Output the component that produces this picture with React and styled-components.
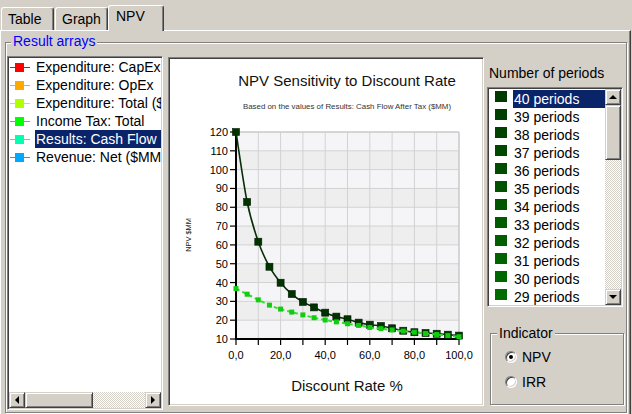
import React from "react";
import styled, { createGlobalStyle } from "styled-components";

const Global = createGlobalStyle`
  html, body { margin: 0; padding: 0; }
  body {
    width: 632px; height: 414px; overflow: hidden;
    background: #d4d0c8;
    font-family: "Liberation Sans", Arial, sans-serif;
    font-size: 14px; color: #000;
  }
`;

const Window = styled.div`
  width: 632px; height: 414px; overflow: hidden; background: #d4d0c8;
`;

const TabStrip = styled.div`
  position: relative; z-index: 1;
  display: flex; align-items: flex-end;
  height: 31px; padding-left: 1px; box-sizing: border-box;
`;

const Tab = styled.div`
  box-sizing: border-box;
  width: ${(p) => p.$w}px;
  height: ${(p) => (p.$active ? 26 : 23)}px;
  margin-left: ${(p) => p.$ml || 0}px;
  margin-bottom: ${(p) => (p.$active ? 0 : 1)}px;
  padding-left: ${(p) => (p.$active ? 7 : 6)}px;
  padding-top: ${(p) => (p.$active ? 2 : 3)}px;
  line-height: 16px;
  background: #d4d0c8;
  border-top: 1px solid #fff;
  border-left: 1px solid #fff;
  border-right: 1px solid #404040;
  border-radius: 3px 3px 0 0;
  box-shadow: inset -1px 0 0 #808080;
`;

const Panel = styled.div`
  box-sizing: border-box;
  width: 631px; height: 390px;
  margin-top: -1px;
  border-top: 1px solid #fff;
  border-left: 1px solid #fff;
  border-right: 1px solid #404040;
  box-shadow: inset -1px 0 0 #808080;
  padding: 11px 3px 0 4px;
`;

const GroupBox = styled.div`
  position: relative;
  box-sizing: border-box;
  width: ${(p) => p.$w}px;
  height: ${(p) => p.$h}px;
  margin: ${(p) => p.$m || "0"};
  border: 1px solid #808080;
  box-shadow: inset 1px 1px 0 #fff, 1px 1px 0 #fff;
  padding: ${(p) => p.$pad};
`;

const Legend = styled.span`
  position: absolute;
  top: ${(p) => p.$top}px; left: ${(p) => p.$left}px;
  padding: 0 2px;
  line-height: 16px;
  background: #d4d0c8;
  color: ${(p) => p.$color || "#000"};
`;

const Row = styled.div`
  display: flex; align-items: flex-start;
`;

const Sunken = styled.div`
  box-sizing: border-box;
  display: flex; flex-direction: ${(p) => p.$dir || "column"};
  width: ${(p) => p.$w}px; height: ${(p) => p.$h}px;
  margin: ${(p) => p.$m || "0"};
  background: #fff;
  border: 1px solid;
  border-color: #808080 #fff #fff #808080;
  box-shadow: inset 1px 1px 0 #404040, inset -1px -1px 0 #d4d0c8;
  padding: 1px;
  overflow: hidden;
`;

const ListBody = styled.div`
  flex: 1; min-width: 0; overflow: hidden;
  padding-top: ${(p) => p.$pt || 0}px;
`;

const ArrayItem = styled.div`
  display: flex; align-items: center;
  height: 18px; white-space: nowrap;
`;

const ItemIcon = styled.svg`
  flex: none; width: 26px; height: 18px;
`;

const ItemText = styled.span`
  flex: 1;
  line-height: 18px;
  padding-left: 1px;
  background: ${(p) => (p.$sel ? "#0a246a" : "transparent")};
  color: ${(p) => (p.$sel ? "#fff" : "#000")};
`;

const HScroll = styled.div`
  flex: none; display: flex; height: 16px;
`;

const VScroll = styled.div`
  flex: none; display: flex; flex-direction: column; width: 16px;
`;

const Btn = styled.div`
  flex: none; box-sizing: border-box;
  display: flex; align-items: center; justify-content: center;
  width: ${(p) => p.$w || 16}px; height: ${(p) => p.$h || 16}px;
  background: #d4d0c8;
  border: 1px solid;
  border-color: #d4d0c8 #404040 #404040 #d4d0c8;
  box-shadow: inset 1px 1px 0 #fff, inset -1px -1px 0 #808080;
`;

const Track = styled.div`
  flex: 1;
  background-color: #fff;
  background-image: conic-gradient(#d4d0c8 25%, #fff 0 50%, #d4d0c8 0 75%, #fff 0);
  background-size: 2px 2px;
`;

const ChartSvg = styled.svg`
  display: block; width: 312px; height: 345px;
  font-family: "Liberation Sans", Arial, sans-serif;
`;

const Column = styled.div`
  display: flex; flex-direction: column;
  width: 137px; margin-left: 3px;
`;

const Label = styled.div`
  line-height: 16px; margin: 9px 0 6px 2px; white-space: nowrap;
`;

const PeriodItem = styled.div`
  display: flex; align-items: flex-start;
  height: 18px; padding-left: 6px; white-space: nowrap;
`;

const Swatch = styled.span`
  flex: none; width: 12px; height: 11px; margin: 1px 6px 0 0;
  background: ${(p) => p.$c};
`;

const RadioRow = styled.div`
  display: flex; align-items: center; height: 25px; gap: 5px;
`;

const RadioCircle = styled.span`
  box-sizing: border-box; position: relative;
  width: 12px; height: 12px; border-radius: 50%;
  background: #fff;
  border: 1px solid; border-color: #808080 #fff #fff #808080;
  box-shadow: inset 1px 1px 0 #404040, inset -1px -1px 0 #d4d0c8;
  &::after {
    content: ""; display: ${(p) => (p.$on ? "block" : "none")};
    position: absolute; left: 3px; top: 3px;
    width: 4px; height: 4px; border-radius: 50%; background: #000;
  }
`;

const Arrow = ({ dir }) => {
  const pts = {
    left: "5,0 1,4 5,8",
    right: "1,0 5,4 1,8",
    up: "0,5 4,1 8,5",
    down: "0,1 4,5 8,1",
  }[dir];
  const horiz = dir === "left" || dir === "right";
  return (
    <svg width={horiz ? 6 : 9} height={horiz ? 9 : 6} viewBox={horiz ? "0 0 6 9" : "0 0 9 6"}>
      <polygon points={pts} fill="#000" />
    </svg>
  );
};

const arrays = [
  { c: "#ff0000", t: "Expenditure: CapEx" },
  { c: "#ffa800", t: "Expenditure: OpEx" },
  { c: "#b0ff00", t: "Expenditure: Total ($MM)" },
  { c: "#00ff00", t: "Income Tax: Total" },
  { c: "#00ffb0", t: "Results: Cash Flow", sel: true },
  { c: "#00a8ff", t: "Revenue: Net ($MM)" },
];

const lerp = (a, b, t) => Math.round(a + (b - a) * t);
const periods = Array.from({ length: 12 }, (_, i) => {
  const t = i / 11;
  const g = lerp(0x3a, 0x6c, t);
  return { n: 40 - i, c: `rgb(0,${g},0)` };
});

const s1 = [120, 82.8, 61.7, 48.4, 39.9, 33.9, 29.7, 26.8, 24, 21.9, 20.5, 18.7, 17.6, 16.9, 15.7, 14.4, 13.6, 13.2, 12.8, 12.3, 11.8];
const s2 = [36.8, 33.8, 30.8, 28, 25.9, 24.3, 22.8, 21.3, 20.1, 19.1, 18.1, 17.2, 16.1, 15.5, 14.8, 14.2, 13.6, 12.9, 12.4, 11.8, 11.2];

const X0 = 66, X1 = 289, Y0 = 73, Y1 = 280;
const xs = (r) => X0 + ((X1 - X0) * r) / 100;
const ys = (v) => Y1 - ((Y1 - Y0) * (v - 10)) / 110;

const smooth = (vals) => {
  const p = vals.map((v, i) => [xs(i * 5), ys(v)]);
  let d = `M${p[0][0]},${p[0][1]}`;
  for (let i = 0; i < p.length - 1; i++) {
    const p0 = p[i - 1] || p[i];
    const p1 = p[i];
    const p2 = p[i + 1];
    const p3 = p[i + 2] || p2;
    const c1 = [p1[0] + (p2[0] - p0[0]) / 6, p1[1] + (p2[1] - p0[1]) / 6];
    const c2 = [p2[0] - (p3[0] - p1[0]) / 6, p2[1] - (p3[1] - p1[1]) / 6];
    d += ` C${c1[0].toFixed(2)},${c1[1].toFixed(2)} ${c2[0].toFixed(2)},${c2[1].toFixed(2)} ${p2[0].toFixed(2)},${p2[1].toFixed(2)}`;
  }
  return d;
};

const Chart = () => {
  const yVals = [120, 110, 100, 90, 80, 70, 60, 50, 40, 30, 20, 10];
  const xVals = [0, 10, 20, 30, 40, 50, 60, 70, 80, 90, 100];
  return (
    <ChartSvg viewBox="0 0 312 345">
      <text x="177" y="27" fontSize="15" textAnchor="middle" fill="#111">NPV Sensitivity to Discount Rate</text>
      <text x="177" y="49.5" fontSize="7.9" textAnchor="middle" fill="#333">Based on the values of Results: Cash Flow After Tax ($MM)</text>
      {yVals.slice(0, -1).map((v, i) => (
        <rect key={v} x={X0} y={ys(v)} width={X1 - X0} height={ys(v - 10) - ys(v)} fill={i % 2 ? "#eeeeee" : "#f5f5f7"} />
      ))}
      {xVals.slice(1).map((v) => (
        <line key={v} x1={xs(v)} x2={xs(v)} y1={Y0} y2={Y1} stroke="#d2d2d2" strokeWidth="1" />
      ))}
      {yVals.slice(0, -1).map((v) => (
        <line key={v} x1={X0} x2={X1} y1={ys(v)} y2={ys(v)} stroke="#d2d2d2" strokeWidth="1" />
      ))}
      <line x1={X1} x2={X1} y1={Y0} y2={Y1} stroke="#c4c4c4" />
      <line x1={X0} x2={X1} y1={Y0} y2={Y0} stroke="#c4c4c4" />
      {yVals.map((v) => (
        <g key={v}>
          <line x1={X0 - 6} x2={X0} y1={ys(v)} y2={ys(v)} stroke="#000" strokeWidth="1.2" />
          <text x={X0 - 8} y={ys(v) + 4} fontSize="11" textAnchor="end" fill="#000">{v}</text>
        </g>
      ))}
      {xVals.map((v) => (
        <line key={v} x1={xs(v)} x2={xs(v)} y1={Y1} y2={Y1 + 6} stroke="#000" strokeWidth="1.2" />
      ))}
      {xVals.filter((v) => v % 20 === 0).map((v) => (
        <text key={v} x={xs(v)} y={300} fontSize="11" textAnchor="middle" fill="#000">{v.toFixed(1).replace(".", ",")}</text>
      ))}
      <line x1={X0} x2={X0} y1={Y0} y2={Y1 + 1} stroke="#000" strokeWidth="2" />
      <line x1={X0 - 1} x2={X1} y1={Y1} y2={Y1} stroke="#000" strokeWidth="2" />
      <text x="177" y="332" fontSize="15" textAnchor="middle" fill="#111">Discount Rate %</text>
      <text x="21" y="176" fontSize="7.4" textAnchor="middle" fill="#222" transform="rotate(-90 21 176)">NPV $MM</text>
      <path d={smooth(s1)} fill="none" stroke="#0a2e0a" strokeWidth="1.6" />
      {s1.map((v, i) => (
        <rect key={i} x={xs(i * 5) - 3.5} y={ys(v) - 3.5} width="7" height="7" fill="#003300" stroke="#001a00" strokeWidth="0.6" />
      ))}
      <path d={smooth(s2)} fill="none" stroke="#33dd33" strokeWidth="2" strokeDasharray="4 3" />
      {s2.map((v, i) => (
        <rect key={i} x={xs(i * 5) - 2.5} y={ys(v) - 2.5} width="5" height="5" fill="#11cc11" />
      ))}
    </ChartSvg>
  );
};

export default function App() {
  return (
    <Window>
      <Global />
      <TabStrip>
        <Tab $w={53}>Table</Tab>
        <Tab $w={53} $ml={1}>Graph</Tab>
        <Tab $w={56} $active>NPV</Tab>
      </TabStrip>
      <Panel>
        <GroupBox $w={622} $h={371} $pad="13px 0 0 1px">
          <Legend $top={-10} $left={5} $color="#0000ff">Result arrays</Legend>
          <Row>
            <Sunken $w={156} $h={354}>
              <ListBody>
                {arrays.map((a) => (
                  <ArrayItem key={a.t}>
                    <ItemIcon viewBox="0 0 26 18">
                      <line x1="1" x2="21" y1="9.5" y2="9.5" stroke={a.c} strokeWidth="1" />
                      <rect x="6" y="5" width="9" height="9" fill={a.c} />
                    </ItemIcon>
                    <ItemText $sel={a.sel}>{a.t}</ItemText>
                  </ArrayItem>
                ))}
              </ListBody>
              <HScroll>
                <Btn><Arrow dir="left" /></Btn>
                <Btn $w={68} />
                <Track />
                <Btn><Arrow dir="right" /></Btn>
              </HScroll>
            </Sunken>
            <Sunken $w={316} $h={349} $m="1px 0 0 5px">
              <Chart />
            </Sunken>
            <Column>
              <Label>Number of periods</Label>
              <Sunken $w={136} $h={220} $dir="row">
                <ListBody $pt={1}>
                  {periods.map((p, i) => (
                    <PeriodItem key={p.n}>
                      <Swatch $c={p.c} />
                      <ItemText $sel={i === 0}>{p.n} periods</ItemText>
                    </PeriodItem>
                  ))}
                </ListBody>
                <VScroll>
                  <Btn><Arrow dir="up" /></Btn>
                  <Btn $h={55} />
                  <Track />
                  <Btn><Arrow dir="down" /></Btn>
                </VScroll>
              </Sunken>
              <GroupBox $w={134} $h={72} $m="26px 0 0 3px" $pad="10px 0 0 14px">
                <Legend $top={-9} $left={6}>Indicator</Legend>
                <RadioRow><RadioCircle $on />NPV</RadioRow>
                <RadioRow><RadioCircle />IRR</RadioRow>
              </GroupBox>
            </Column>
          </Row>
        </GroupBox>
      </Panel>
    </Window>
  );
}
